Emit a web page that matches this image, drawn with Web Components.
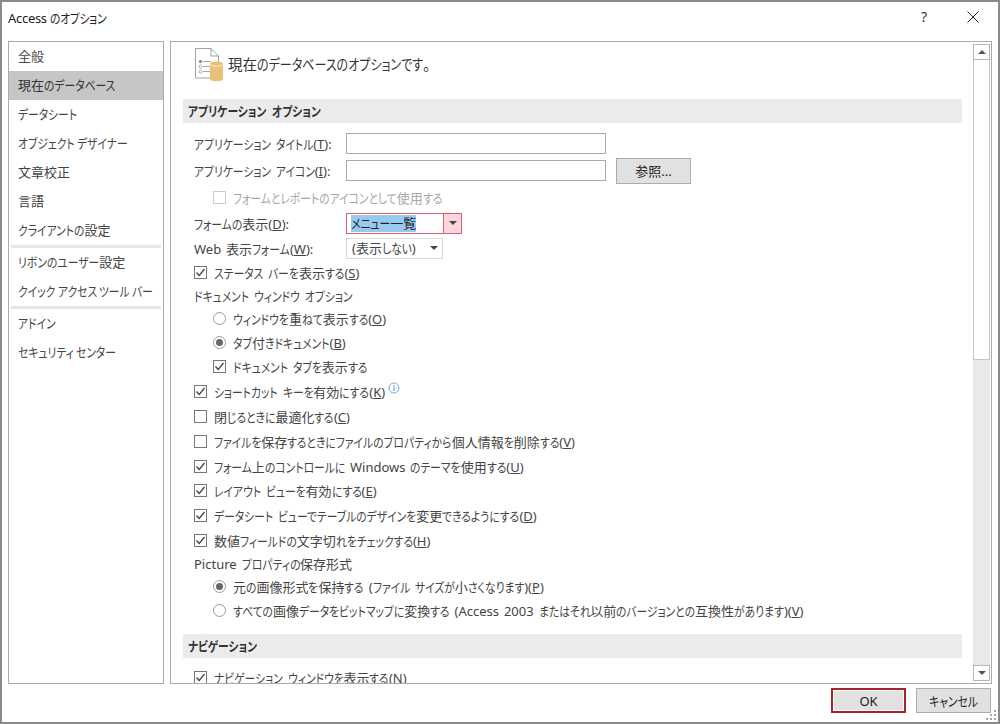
<!doctype html>
<html lang="ja"><head><meta charset="utf-8">
<style>
html,body{margin:0;height:100%;background:#fff}
body{font:13px "Noto Sans","Noto Sans CJK JP",sans-serif;color:#444;font-feature-settings:"palt";word-spacing:1.5px;overflow:hidden}
</style></head><body>
<opt-dialog>
<span slot="title">Access のオプション</span>
<nav-list slot="nav">
<nav-item>全般</nav-item>
<nav-item selected>現在のデータベース</nav-item>
<nav-item>データシート</nav-item>
<nav-item>オブジェクト デザイナー</nav-item>
<nav-item>文章校正</nav-item>
<nav-item>言語</nav-item>
<nav-item>クライアントの設定</nav-item>
<nav-sep></nav-sep>
<nav-item>リボンのユーザー設定</nav-item>
<nav-item>クイック アクセス ツール バー</nav-item>
<nav-sep></nav-sep>
<nav-item>アドイン</nav-item>
<nav-item>セキュリティ センター</nav-item>
</nav-list>
<opt-panel slot="panel">
<panel-head>現在のデータベースのオプションです。</panel-head>
<sec-head>アプリケーション オプション</sec-head>
<opt-row h="28" pad="11"><opt-label>アプリケーション タイトル(<u>T</u>):</opt-label><text-box></text-box></opt-row>
<opt-row h="27" pad="11"><opt-label>アプリケーション アイコン(<u>I</u>):</opt-label><text-box></text-box><push-btn>参照...</push-btn></opt-row>
<opt-row h="26" pad="30"><opt-check disabled>フォームとレポートのアイコンとして使用する</opt-check></opt-row>
<opt-row h="26" pad="11"><opt-label>フォームの表示(<u>D</u>):</opt-label><combo-box hot>メニュー一覧</combo-box></opt-row>
<opt-row h="24" pad="11"><opt-label>Web 表示フォーム(<u>W</u>):</opt-label><combo-box>(表示しない)</combo-box></opt-row>
<opt-row h="24" pad="11"><opt-check checked>ステータス バーを表示する(<u>S</u>)</opt-check></opt-row>
<opt-row h="22" pad="11"><opt-text>ドキュメント ウィンドウ オプション</opt-text></opt-row>
<opt-row h="24" pad="30"><opt-radio>ウィンドウを重ねて表示する(<u>O</u>)</opt-radio></opt-row>
<opt-row h="24" pad="30"><opt-radio checked>タブ付きドキュメント(<u>B</u>)</opt-radio></opt-row>
<opt-row h="25" pad="30"><opt-check checked>ドキュメント タブを表示する</opt-check></opt-row>
<opt-row h="25" pad="11"><opt-check checked>ショートカット キーを有効にする(<u>K</u>)</opt-check><info-icon></info-icon></opt-row>
<opt-row h="25" pad="11"><opt-check>閉じるときに最適化する(<u>C</u>)</opt-check></opt-row>
<opt-row h="25" pad="11"><opt-check>ファイルを保存するときにファイルのプロパティから個人情報を削除する(<u>V</u>)</opt-check></opt-row>
<opt-row h="24" pad="11"><opt-check checked>フォーム上のコントロールに Windows のテーマを使用する(<u>U</u>)</opt-check></opt-row>
<opt-row h="25" pad="11"><opt-check checked>レイアウト ビューを有効にする(<u>E</u>)</opt-check></opt-row>
<opt-row h="25" pad="11"><opt-check checked>データシート ビューでテーブルのデザインを変更できるようにする(<u>D</u>)</opt-check></opt-row>
<opt-row h="24" pad="11"><opt-check checked>数値フィールドの文字切れをチェックする(<u>H</u>)</opt-check></opt-row>
<opt-row h="22" pad="11"><opt-text>Picture プロパティの保存形式</opt-text></opt-row>
<opt-row h="24" pad="30"><opt-radio checked>元の画像形式を保持する (ファイル サイズが小さくなります)(<u>P</u>)</opt-radio></opt-row>
<opt-row h="24" pad="30"><opt-radio>すべての画像データをビットマップに変換する (Access 2003 またはそれ以前のバージョンとの互換性があります)(<u>V</u>)</opt-radio></opt-row>
<sec-head second>ナビゲーション</sec-head>
<opt-row h="24" pad="11"><opt-check checked>ナビゲーション ウィンドウを表示する(N)</opt-check></opt-row>
</opt-panel>
<push-btn slot="ok" default>OK</push-btn>
<push-btn slot="cancel">キャンセル</push-btn>
</opt-dialog>
<script>
function def(name, css, html, init){
  customElements.define(name, class extends HTMLElement{
    connectedCallback(){
      if(this.shadowRoot) return;
      const r=this.attachShadow({mode:'open'});
      r.innerHTML='<style>'+css+'</style>'+(typeof html==='function'?html(this):html);
      if(init) init(this,r);
    }
  });
}
def('opt-dialog',`
:host{display:flex;flex-direction:column;box-sizing:border-box;width:1000px;height:724px;border:2px solid #8a8a8a;background:#fff}
.title{height:39px;flex:none;display:flex;align-items:flex-start;padding:0 6px;font-size:13px;color:#222}
.title .t{margin-top:6px;flex:1;word-spacing:0;letter-spacing:-.3px}
.q{font-size:14px;margin:5px 40px 0 0;color:#333}
.x{margin:9px 13px 0 0}
.main{flex:none;height:643px;display:flex;gap:6px;padding:0 6px}
.side{width:156px;box-sizing:border-box;border:1px solid #ababab;flex:none}
.content{flex:none;width:822px;box-sizing:border-box;border:1px solid #ababab;display:flex;overflow:hidden}
.scroll{flex:1;overflow:hidden;min-width:0}
.foot{flex:1;display:flex;justify-content:flex-end;gap:10px;padding:4px 7px 0 0;position:relative;align-items:flex-start}
.grip{position:absolute;right:1px;bottom:1px}
`,`
<div class="title"><span class="t"><slot name="title"></slot></span><span class="q">?</span>
<svg class="x" width="12" height="12" viewBox="0 0 12 12"><path d="M.5 .5l11 11M11.500 .5l-11 11" stroke="#222" stroke-width="1" fill="none"/></svg></div>
<div class="main"><div class="side"><slot name="nav"></slot></div>
<div class="content"><div class="scroll"><slot name="panel"></slot></div><scroll-bar></scroll-bar></div></div>
<div class="foot"><slot name="ok"></slot><slot name="cancel"></slot>
<svg class="grip" width="11" height="11" viewBox="0 0 11 11" fill="#a8a8a8"><rect x="8" y="0" width="2" height="2"/><rect x="4" y="4" width="2" height="2"/><rect x="8" y="4" width="2" height="2"/><rect x="0" y="8" width="2" height="2"/><rect x="4" y="8" width="2" height="2"/><rect x="8" y="8" width="2" height="2"/></svg></div>`);
def('nav-list',':host{display:block}','<slot></slot>');
def('nav-item',`:host{display:flex;align-items:center;box-sizing:border-box;height:29px;padding:0 0 2px 9px;font-size:13px;color:#444;white-space:nowrap;word-spacing:-1px}
:host([selected]){background:#c6c6c6;color:#333}`,'<span><slot></slot></span>');
def('nav-sep',':host{display:block;height:3px;background:#e6e6e6;margin:0 2px}','');
def('opt-panel',':host{display:block;padding:0 11px 0 12px;height:641px;overflow:hidden}','<slot></slot>');
def('panel-head',`:host{display:flex;align-items:flex-start;box-sizing:border-box;height:57px;padding:6px 0 0 12px;font-size:14.5px;line-height:22px;color:#333;gap:4px}
svg{flex:none}.t{margin-top:5px}`,`
<svg width="29" height="35" viewBox="0 0 29 35"><path d="M.5 .5H16L23.500 8V30H.5Z" fill="#fff" stroke="#a0a0a0"/><path d="M16 .5V8H23.500" fill="none" stroke="#a0a0a0"/>
<g fill="none" stroke="#a8a8a8"><path d="M8 13.500h8M8 18.500h7M8 23.500h7"/><circle cx="5.500" cy="18.500" r="1.500"/><circle cx="5.500" cy="23.500" r="1.500"/></g><circle cx="5.500" cy="13.500" r="1.600" fill="#808080"/>
<path d="M15 16c0-3.500 13-3.500 13 0V31c0 3-13 3-13 0Z" fill="#e8c077"/><path d="M15 16c0 3 13 3 13 0" fill="none" stroke="#fbeed3"/></svg><span class="t"><slot></slot></span>`);
def('sec-head',`:host{display:flex;align-items:center;height:24px;padding:0 0 2px 5px;box-sizing:border-box;background:#ebebeb;font-size:13px;font-weight:700;color:#333;margin-bottom:6px;word-spacing:2px}
:host([second]){margin:12px 0 7px}`,'<span><slot></slot></span>');
def('opt-row',`:host{display:flex;align-items:center;box-sizing:border-box;white-space:nowrap;overflow:hidden}`,'<slot></slot>',(el)=>{
  el.style.height=el.getAttribute('h')+'px';
  el.style.paddingLeft=el.getAttribute('pad')+'px';
});
def('opt-label',':host{display:block;width:152px;flex:none}','<slot></slot>');
def('opt-text',':host{display:block}','<slot></slot>');
def('text-box',':host{display:block;box-sizing:border-box;width:260px;height:21px;border:1px solid #ababab;background:#fff;flex:none}','');
def('push-btn',`:host{display:flex;align-items:center;justify-content:center;box-sizing:border-box;width:75px;height:26px;flex:none;background:#e1e1e1;border:1px solid #adadad;color:#222;font-size:13px;margin-left:10px}
:host([default]){border:2px solid #a4262c;box-shadow:inset 0 0 0 1px #fff}
:host([slot]){margin-left:0;height:25px}`,'<span><slot></slot></span>');
def('combo-box',`:host{display:flex;align-items:center;box-sizing:border-box;width:97px;height:21px;border:1px solid #d9d9d9;padding-left:5px;font-size:13px;flex:none;position:relative}
:host([hot]){width:116px;border:1px solid #d6606c;padding-left:4px;color:#222}
:host([hot]) .v{background:#99c9ef}
.a{position:absolute;right:0;top:0;bottom:0;width:17px;display:flex;align-items:center;justify-content:center}
:host([hot]) .a{background:#fdd5da;border-left:1px solid #d6606c}
.v{display:inline-block;line-height:17px}`,`<span class="v"><slot></slot></span><span class="a"><svg width="8" height="4" viewBox="0 0 8 4"><path d="M0 0h8L4 4Z" fill="#444"/></svg></span>`);
const box=(c)=>`<span class="b">${c}</span><span class="l"><slot></slot></span>`;
const CK='<svg width="13" height="13" viewBox="0 0 13 13"><path d="M2.500 6.500L5.200 9.500 10.500 3" fill="none" stroke="#444" stroke-width="1.300"/></svg>';
def('opt-check',`:host{display:flex;align-items:center;gap:7px}
.b{box-sizing:border-box;width:13px;height:13px;border:1px solid #777;display:block;flex:none;background:#fff;line-height:0}
svg{margin:-1px}
:host([disabled]){color:#a6a6a6}:host([disabled]) .b{border-color:#ccc}`,(el)=>box(el.hasAttribute('checked')?CK:''));
def('opt-radio',`:host{display:flex;align-items:center;gap:7px}
.b{box-sizing:border-box;width:13px;height:13px;border:1px solid #9a9a9a;border-radius:50%;display:flex;align-items:center;justify-content:center;flex:none}
i{display:block;width:7px;height:7px;border-radius:50%;background:#666}`,(el)=>box(el.hasAttribute('checked')?'<i></i>':''));
def('info-icon',':host{display:block;line-height:0;margin:-8px 0 0 3px}',`<svg width="12" height="12" viewBox="0 0 12 12"><circle cx="6" cy="6" r="5" fill="none" stroke="#7aa7dc"/><path d="M6 5v4M6 3v1.200" stroke="#4a80c4" stroke-width="1"/></svg>`);
def('scroll-bar',`:host{display:flex;flex-direction:column;flex:none;width:17px;box-sizing:border-box;margin:2px 1px 2px 0;background:#e9e9e9}
.btn{height:16px;box-sizing:border-box;border:1px solid #b5b5b5;background:#fff;display:flex;align-items:center;justify-content:center;flex:none}
.thumb{height:300px;box-sizing:border-box;border:1px solid #c4c4c4;border-top:0;background:#fff;flex:none}
.sp{flex:1}`,`<div class="btn"><svg width="8" height="4" viewBox="0 0 8 4"><path d="M0 4h8L4 0Z" fill="#555"/></svg></div><div class="thumb"></div><div class="sp"></div><div class="btn"><svg width="8" height="4" viewBox="0 0 8 4"><path d="M0 0h8L4 4Z" fill="#555"/></svg></div>`);
/* kana-run: Meiryo UI kana are narrow, so kana runs are condensed horizontally */
const KS=.83;
customElements.define('kana-run',class extends HTMLElement{
  connectedCallback(){
    if(this.shadowRoot) return;
    this.attachShadow({mode:'open'}).innerHTML=`<style>:host{display:inline-block;transform:scaleX(${KS});transform-origin:0 50%}</style><slot></slot>`;
    const w=this.getBoundingClientRect().width/KS;
    this.style.marginRight=(-w*(1-KS))+'px';
  }
});
(function(){
  const w=document.createTreeWalker(document.querySelector('opt-dialog'),NodeFilter.SHOW_TEXT);
  const nodes=[];let n;
  while(n=w.nextNode()) if(/[\u3041-\u30ff]/.test(n.data)) nodes.push(n);
  for(const t of nodes){
    const parts=t.data.split(/([\u3041-\u30ff]+)/);
    const p=t.parentNode;
    for(const s of parts){
      if(!s) continue;
      if(/^[\u3041-\u30ff]/.test(s)){
        const k=document.createElement('kana-run');k.textContent=s;p.insertBefore(k,t);
      } else p.insertBefore(document.createTextNode(s),t);
    }
    p.removeChild(t);
  }
})();
</script>
</body></html>
